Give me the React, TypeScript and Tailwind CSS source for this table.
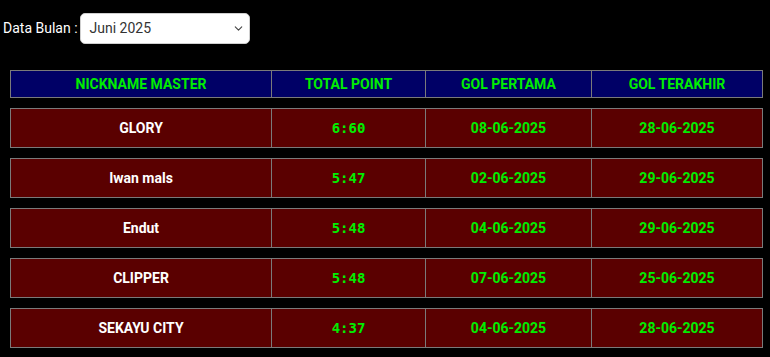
import { ChevronDown } from "lucide-react";

const rows = [
  { name: "GLORY", point: "6:60", first: "08-06-2025", last: "28-06-2025" },
  { name: "Iwan mals", point: "5:47", first: "02-06-2025", last: "29-06-2025" },
  { name: "Endut", point: "5:48", first: "04-06-2025", last: "29-06-2025" },
  { name: "CLIPPER", point: "5:48", first: "07-06-2025", last: "25-06-2025" },
  { name: "SEKAYU CITY", point: "4:37", first: "04-06-2025", last: "28-06-2025" },
];

const cols = "grid grid-cols-[260px_154px_166px_1fr]";
const cell = "flex items-center justify-center border-l border-[#7a7a7a] first:border-l-0";

export default function App() {
  return (
    <div className="min-h-[357px] bg-black font-['Roboto',sans-serif]">
      <div className="flex items-center gap-[2px] pl-[3px] pt-[13px]">
        <span className="text-[14px] text-white">Data Bulan :</span>
        <div className="flex h-[31px] w-[170px] items-center justify-between rounded-[5px] border border-[#cfcfcf] bg-white pl-[9px] pr-[4px] text-[14px] text-[#333]">
          <span>Juni 2025</span>
          <ChevronDown size={13} strokeWidth={2} className="text-[#444]" />
        </div>
      </div>

      <div className="ml-[10px] mt-[26px] w-[753px]">
        <div className={`${cols} h-[28px] border border-[#7a7a7a] bg-[#000066] text-[14px] font-bold text-[#00ee00]`}>
          <div className={cell}>NICKNAME MASTER</div>
          <div className={cell}>TOTAL POINT</div>
          <div className={cell}>GOL PERTAMA</div>
          <div className={cell}>GOL TERAKHIR</div>
        </div>

        {rows.map((r) => (
          <div
            key={r.name}
            className={`${cols} mt-[10px] h-[40px] border border-[#7a7a7a] bg-[#5a0000] text-[14px] font-bold`}
          >
            <div className={`${cell} text-white`}>{r.name}</div>
            <div className={`${cell} font-['DejaVu_Sans_Mono',monospace] text-[#00ee00]`}>{r.point}</div>
            <div className={`${cell} text-[#00ee00]`}>{r.first}</div>
            <div className={`${cell} text-[#00ee00]`}>{r.last}</div>
          </div>
        ))}
      </div>
    </div>
  );
}
